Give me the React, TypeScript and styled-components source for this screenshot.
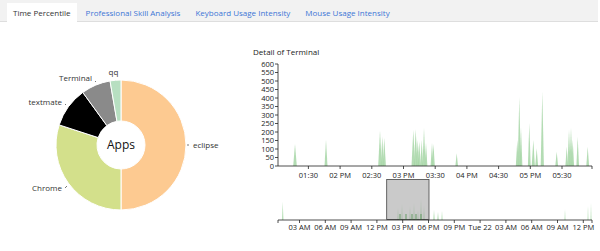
import styled, { createGlobalStyle } from "styled-components";

const GlobalStyle = createGlobalStyle`
  html, body {
    margin: 0;
    padding: 0;
    background: #fff;
  }
  body {
    font-family: "Open Sans", "DejaVu Sans", sans-serif;
    width: 600px;
    height: 251px;
    overflow: hidden;
  }
`;

const StyledPage = styled.div`
  display: flex;
  flex-direction: column;
  width: 600px;
  height: 251px;
`;

const StyledTabBar = styled.nav`
  display: flex;
  align-items: flex-start;
  width: 598px;
  height: 22px;
  padding-left: 7px;
  box-sizing: border-box;
  background: #f2f2f2;
  border-bottom: 1px solid #dedede;
`;

const StyledTab = styled.div<{ $active?: boolean }>`
  margin-top: 3px;
  margin-right: 3px;
  padding: 0 6px;
  height: 19px;
  line-height: 19px;
  font-size: 8px;
  white-space: nowrap;
  color: ${(p) => (p.$active ? "#333" : "#3d76d6")};
  background: ${(p) => (p.$active ? "#fff" : "transparent")};
`;

const StyledContent = styled.div`
  display: flex;
  flex: 1;
`;

const StyledPiePanel = styled.div`
  width: 240px;
  flex-shrink: 0;
`;

const StyledDetailPanel = styled.div`
  display: flex;
  flex-direction: column;
  flex: 1;
  padding-top: 24px;
`;

const StyledDetailTitle = styled.div`
  padding-left: 13px;
  height: 12px;
  line-height: 12px;
  font-size: 8px;
  color: #222;
`;

const StyledSvg = styled.svg`
  display: block;
  font-family: "Open Sans", "DejaVu Sans", sans-serif;
`;

const tabs = [
  "Time Percentile",
  "Professional Skill Analysis",
  "Keyboard Usage Intensity",
  "Mouse Usage Intensity",
];

const CX = 121;
const CY = 145;
const R_OUT = 65;
const R_IN = 24;

const slices = [
  { name: "eclipse", from: 0, to: 180, color: "#fdca91" },
  { name: "Chrome", from: 180, to: 288, color: "#d3e08b" },
  { name: "textmate", from: 288, to: 324, color: "#000" },
  { name: "Terminal", from: 324, to: 350.3, color: "#8a8a8a" },
  { name: "qq", from: 350.3, to: 360, color: "#b7dfc1" },
];

function pt(r: number, a: number) {
  const rad = (a * Math.PI) / 180;
  return `${(CX + r * Math.sin(rad)).toFixed(2)} ${(CY - r * Math.cos(rad)).toFixed(2)}`;
}

function arcPath(a0: number, a1: number) {
  const large = a1 - a0 > 180 ? 1 : 0;
  return `M${pt(R_OUT, a0)} A${R_OUT} ${R_OUT} 0 ${large} 1 ${pt(R_OUT, a1)} L${pt(R_IN, a1)} A${R_IN} ${R_IN} 0 ${large} 0 ${pt(R_IN, a0)} Z`;
}

const pieLabels = [
  { text: "eclipse", x: 193, y: 148, anchor: "start", tick: "M187 145 L189 145" },
  { text: "Chrome", x: 62, y: 191, anchor: "end", tick: "M65 188 L67 186" },
  { text: "textmate", x: 62, y: 105, anchor: "end", tick: "M65 104 L66 105" },
  { text: "Terminal", x: 92, y: 81, anchor: "end", tick: "M95 81 L96 82" },
  { text: "qq", x: 113.5, y: 75, anchor: "middle", tick: "" },
];

function PieChart() {
  return (
    <StyledSvg width={240} height={229} viewBox="0 22 240 229">
      {slices.map((s) => (
        <path
          key={s.name}
          d={arcPath(s.from, s.to)}
          fill={s.color}
          stroke="#fff"
          strokeWidth={1}
        />
      ))}
      <text x={CX} y={CY + 4} textAnchor="middle" fontSize={12} fill="#111">
        Apps
      </text>
      {pieLabels.map((l) => (
        <g key={l.text}>
          {l.tick && <path d={l.tick} stroke="#555" strokeWidth={0.8} />}
          <text
            x={l.x}
            y={l.y}
            textAnchor={l.anchor as "start" | "end" | "middle"}
            fontSize={8}
            fill="#333"
          >
            {l.text}
          </text>
        </g>
      ))}
    </StyledSvg>
  );
}

// detail chart drawn in page coordinates (viewBox matches its place on the page)
const AX = 278;
const AX_END = 592;
const BASE = 166;
const TOP = 64;

// [x, top y, half width]
const focusSpikes: [number, number, number][] = [
  [295, 144, 1.8],
  [326, 140, 1.5],
  [380, 130.5, 1.8],
  [382.3, 136.5, 1.5],
  [384.3, 138, 1.6],
  [413.3, 130, 1.8],
  [415.7, 129.3, 1.8],
  [417.7, 140, 1.5],
  [419.3, 141.5, 1.5],
  [421.7, 140, 1.4],
  [424, 128.3, 1.6],
  [426, 143, 1.4],
  [432, 143, 1.4],
  [433.5, 144, 1.3],
  [456.7, 153.3, 1.3],
  [517.3, 140, 1.5],
  [519.3, 97.3, 1.6],
  [521, 128, 1.4],
  [529.3, 123.3, 1.4],
  [533.3, 140, 1.6],
  [536.7, 148.3, 1.4],
  [542.3, 91.7, 1.6],
  [556.7, 151.7, 1.4],
  [566.7, 146.7, 1.3],
  [569, 130, 1.6],
  [571, 128.3, 1.6],
  [572.7, 140, 1.4],
  [577.7, 136.7, 1.3],
  [587.7, 146.7, 1.4],
];

const contextSpikes: [number, number, number, number][] = [
  [282.7, 202, 0.8, 0.6],
  [398, 208, 1, 0.9],
  [402, 204, 1, 0.9],
  [410, 206, 1, 0.9],
  [414, 203, 1, 0.9],
  [418, 210, 1, 0.9],
  [421, 199, 1.2, 0.9],
  [424, 205, 1, 0.9],
  [434, 210, 1, 0.5],
  [438, 212, 1, 0.5],
  [442, 211, 1, 0.4],
  [565, 209, 0.8, 0.4],
  [588, 206, 0.8, 0.4],
  [591, 203, 0.8, 0.4],
];

const yTicks = [0, 50, 100, 150, 200, 250, 300, 350, 400, 450, 500, 550, 600];
const xTicks = ["01:30", "02 PM", "02:30", "03 PM", "03:30", "04 PM", "04:30", "05 PM", "05:30"];
const ctxTicks = [
  "03 AM", "06 AM", "09 AM", "12 PM", "03 PM", "06 PM",
  "09 PM", "Tue 22", "03 AM", "06 AM", "09 AM", "12 PM",
];

const CTX_BASE = 220;

function DetailChart() {
  const yFor = (v: number) => BASE - ((BASE - TOP) * v) / 600;
  return (
    <StyledSvg width={360} height={193} viewBox="240 58 360 193">
      {focusSpikes.map(([x, top, hw], i) => (
        <path
          key={i}
          d={`M${x - hw} ${BASE} L${x} ${top} L${x + hw} ${BASE} Z`}
          fill="#a6d6a6"
          fillOpacity={0.85}
        />
      ))}
      <path d={`M${AX} ${TOP} V${BASE} H${AX_END} V${BASE + 3}`} stroke="#222" strokeWidth={0.8} fill="none" />
      {yTicks.map((v) => (
        <g key={v}>
          <path d={`M${AX - 3} ${yFor(v)} H${AX}`} stroke="#222" strokeWidth={0.8} />
          <text x={AX - 4} y={yFor(v) + 2.5} textAnchor="end" fontSize={7.5} fill="#222">
            {v}
          </text>
        </g>
      ))}
      {xTicks.map((t, i) => {
        const x = 308.4 + i * 31.7;
        return (
          <g key={t}>
            <path d={`M${x} ${BASE} V${BASE + 3}`} stroke="#222" strokeWidth={0.8} />
            <text x={x} y={BASE + 12} textAnchor="middle" fontSize={7.5} fill="#222">
              {t}
            </text>
          </g>
        );
      })}

      {contextSpikes.map(([x, top, hw, op], i) => (
        <path
          key={i}
          d={`M${x - hw} ${CTX_BASE} L${x} ${top} L${x + hw} ${CTX_BASE} Z`}
          fill="#8fcf8f"
          fillOpacity={op}
        />
      ))}
      <rect
        x={386.7}
        y={179.5}
        width={42.3}
        height={40}
        fill="#bdbdbd"
        fillOpacity={0.8}
        stroke="#444"
        strokeWidth={0.8}
      />
      {[400, 406, 412, 416, 421].map((x) => (
        <path key={x} d={`M${x} ${CTX_BASE} V${CTX_BASE - 6}`} stroke="#3c8a3c" strokeWidth={0.7} />
      ))}
      <path d={`M${AX} ${CTX_BASE + 3} V${CTX_BASE} H${AX_END} V${CTX_BASE + 3}`} stroke="#222" strokeWidth={0.8} fill="none" />
      {ctxTicks.map((t, i) => {
        const x = 299.5 + i * 25.8;
        return (
          <g key={i}>
            <path d={`M${x} ${CTX_BASE} V${CTX_BASE + 3}`} stroke="#222" strokeWidth={0.8} />
            <text x={x} y={CTX_BASE + 10} textAnchor="middle" fontSize={7.5} fill="#222">
              {t}
            </text>
          </g>
        );
      })}
    </StyledSvg>
  );
}

function App() {
  return (
    <>
      <GlobalStyle />
      <StyledPage>
        <StyledTabBar>
          {tabs.map((t, i) => (
            <StyledTab key={t} $active={i === 0}>
              {t}
            </StyledTab>
          ))}
        </StyledTabBar>
        <StyledContent>
          <StyledPiePanel>
            <PieChart />
          </StyledPiePanel>
          <StyledDetailPanel>
            <StyledDetailTitle>Detail of Terminal</StyledDetailTitle>
            <DetailChart />
          </StyledDetailPanel>
        </StyledContent>
      </StyledPage>
    </>
  );
}

export default App;
